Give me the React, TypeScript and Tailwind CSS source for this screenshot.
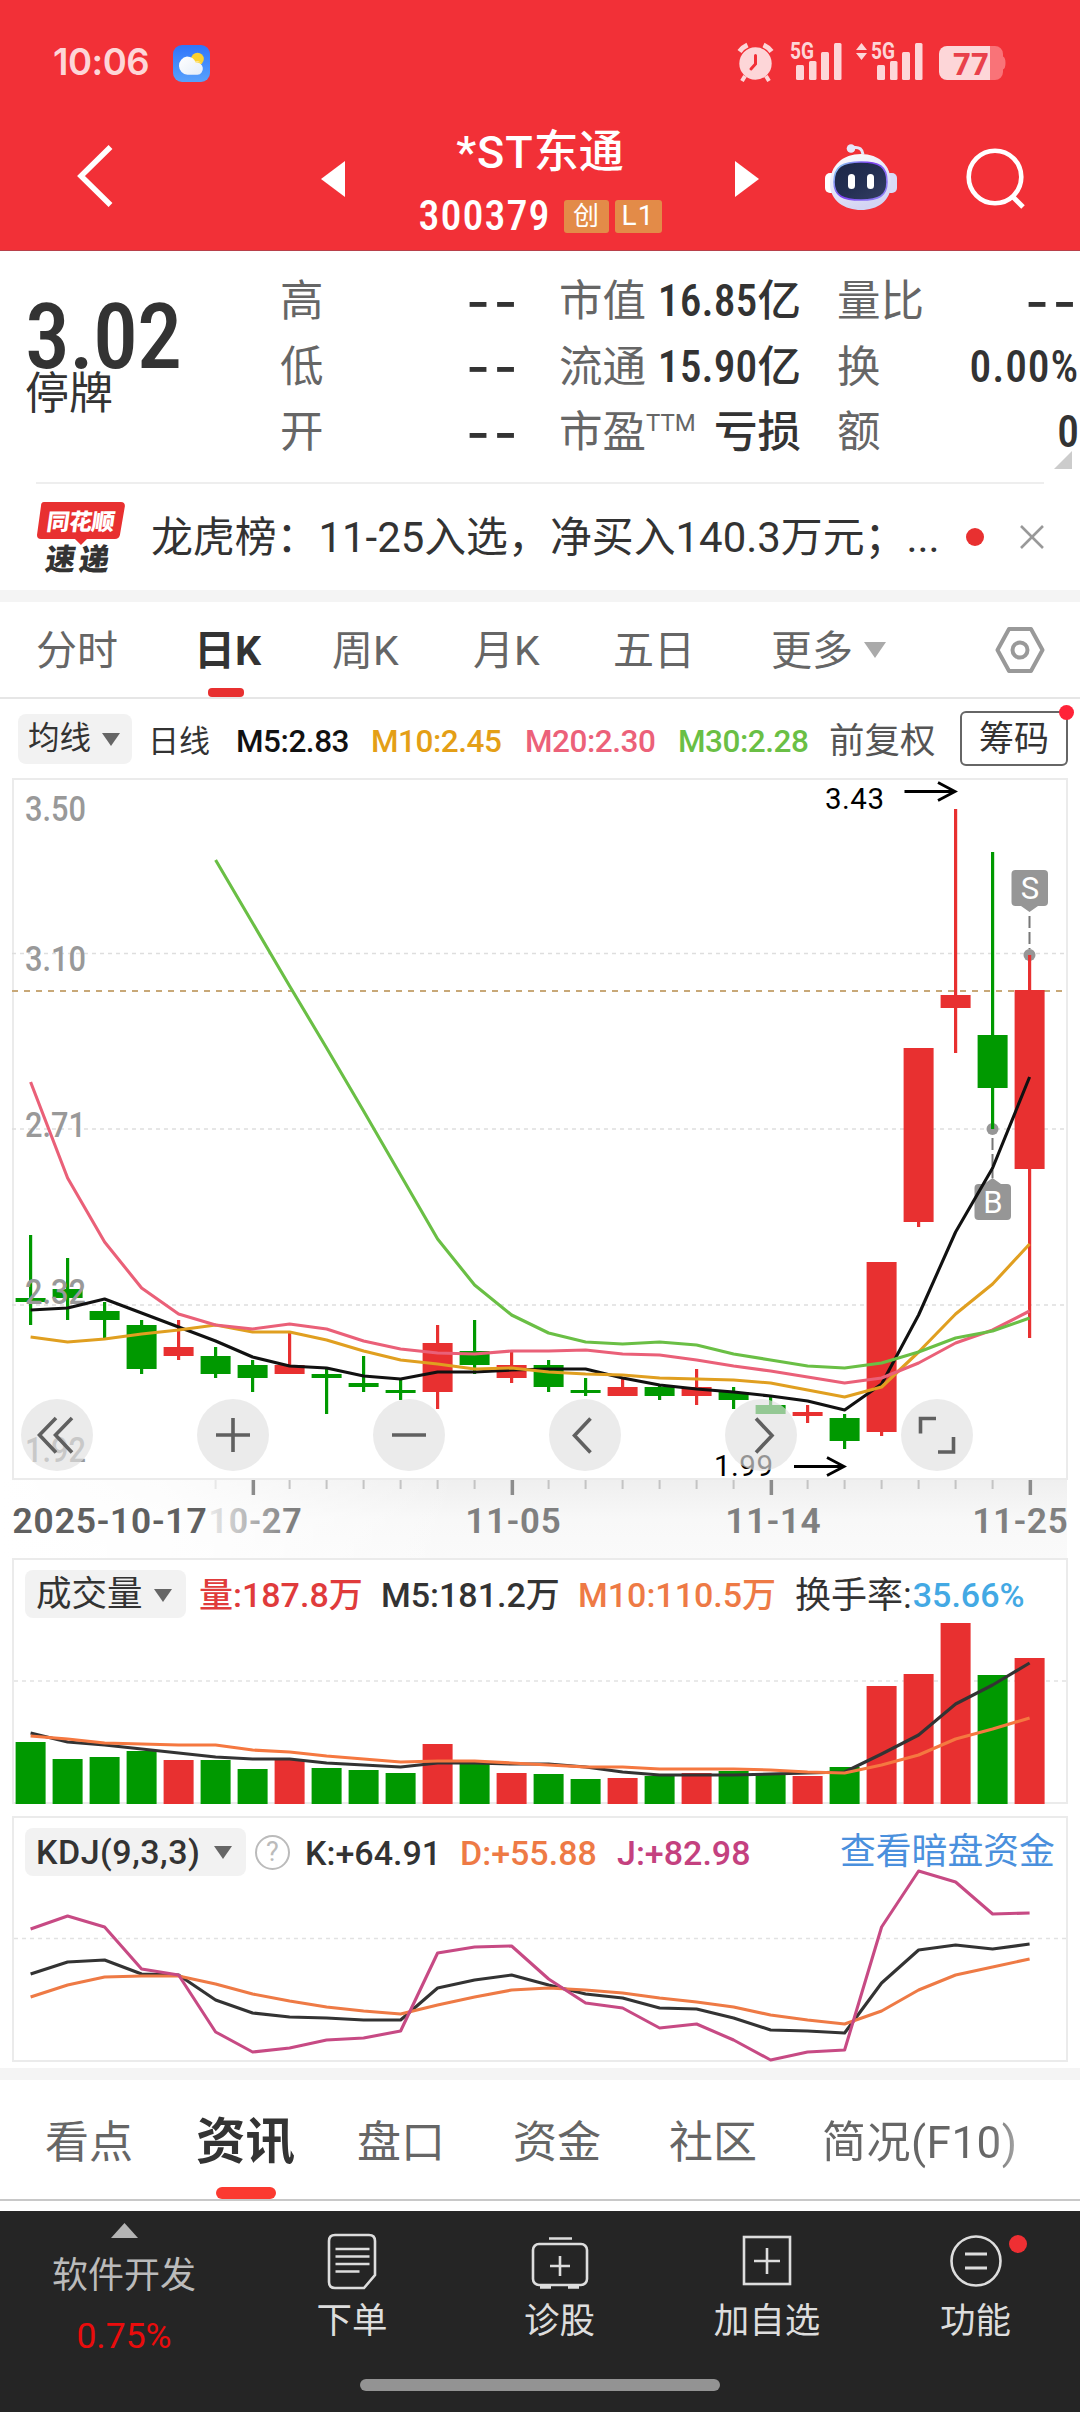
import { ReactNode } from "react";
import clsx from "clsx";

const RED = "#e83030";
const GREEN = "#009900";

// [high, bodyTop, bodyBottom, low, rising]
const candles: [number, number, number, number, boolean][] = [
  [1235, 1298, 1302, 1325, false],
  [1258, 1289, 1298, 1320, false],
  [1302, 1311, 1320, 1338, false],
  [1320, 1325, 1369, 1374, false],
  [1320, 1347, 1356, 1360, true],
  [1347, 1356, 1374, 1378, false],
  [1360, 1365, 1378, 1392, false],
  [1333, 1365, 1374, 1374, true],
  [1368, 1374, 1378, 1414, false],
  [1356, 1383, 1387, 1392, false],
  [1379, 1390, 1393, 1400, false],
  [1325, 1343, 1392, 1409, true],
  [1320, 1351, 1365, 1374, false],
  [1352, 1365, 1378, 1383, true],
  [1360, 1365, 1387, 1392, false],
  [1378, 1390, 1393, 1396, false],
  [1379, 1387, 1396, 1396, true],
  [1386, 1387, 1396, 1400, false],
  [1369, 1387, 1396, 1405, true],
  [1387, 1392, 1400, 1409, false],
  [1397, 1405, 1414, 1414, false],
  [1405, 1412, 1416, 1423, true],
  [1414, 1418, 1441, 1449, false],
  [1262, 1262, 1432, 1436, true],
  [1048, 1048, 1222, 1227, true],
  [809, 995, 1008, 1053, true],
  [852, 1035, 1088, 1129, false],
  [955, 990, 1169, 1338, true],
];

const ma5 = [1310, 1308, 1299, 1313, 1327, 1341, 1357, 1366, 1368, 1376, 1379, 1372, 1372, 1370, 1369, 1369, 1378, 1385, 1389, 1392, 1396, 1401, 1410, 1384, 1315, 1232, 1168, 1077];
const ma10 = [1337, 1342, 1339, 1334, 1330, 1325, 1332, 1332, 1340, 1351, 1360, 1364, 1369, 1368, 1372, 1374, 1375, 1378, 1379, 1380, 1383, 1390, 1397, 1387, 1352, 1314, 1284, 1244];
const ma20 = [1082, 1178, 1242, 1288, 1314, 1325, 1329, 1324, 1329, 1341, 1349, 1353, 1354, 1351, 1351, 1350, 1354, 1355, 1360, 1366, 1371, 1377, 1383, 1378, 1363, 1343, 1330, 1311];
const ma30 = [860, 923, 986, 1048, 1111, 1175, 1239, 1285, 1315, 1333, 1342, 1344, 1342, 1345, 1354, 1360, 1366, 1368, 1363, 1352, 1338, 1331, 1318];

const volumes = [1742, 1759, 1757, 1751, 1760, 1760, 1769, 1760, 1768, 1770, 1773, 1744, 1764, 1773, 1774, 1779, 1778, 1776, 1773, 1771, 1774, 1776, 1767, 1686, 1674, 1623, 1675, 1658];
const vol5 = [1733, 1742, 1745, 1749, 1753, 1757, 1759, 1759, 1763, 1765, 1767, 1763, 1763, 1764, 1764, 1767, 1772, 1775, 1775, 1775, 1774, 1773, 1772, 1754, 1735, 1704, 1685, 1663];
const vol10 = [1736, 1739, 1743, 1744, 1745, 1745, 1750, 1752, 1756, 1759, 1762, 1761, 1761, 1763, 1765, 1767, 1767, 1769, 1769, 1769, 1770, 1772, 1773, 1765, 1755, 1739, 1729, 1718];

const kLine = [1974, 1962, 1960, 1974, 1975, 2000, 2013, 2017, 2018, 2020, 2020, 1988, 1980, 1975, 1985, 1994, 1998, 2008, 2009, 2018, 2030, 2031, 2033, 1983, 1950, 1945, 1949, 1944];
const dLine = [1997, 1985, 1977, 1976, 1976, 1984, 1994, 2001, 2007, 2011, 2014, 2005, 1997, 1990, 1988, 1990, 1993, 1998, 2002, 2007, 2015, 2020, 2024, 2011, 1990, 1975, 1967, 1959];
const jLine = [1929, 1916, 1927, 1969, 1975, 2032, 2052, 2048, 2040, 2038, 2031, 1953, 1947, 1946, 1979, 2003, 2008, 2028, 2024, 2040, 2060, 2052, 2050, 1927, 1871, 1882, 1914, 1913];

const x = (i: number) => 30.6 + i * 37;

function Line({ data, color, from = 0, width = 3.1 }: { data: number[]; color: string; from?: number; width?: number }) {
  return (
    <polyline
      points={data.map((y, i) => `${x(i + from)},${y}`).join(" ")}
      fill="none"
      stroke={color}
      strokeWidth={width}
      strokeLinejoin="round"
    />
  );
}

function Caret({ className }: { className?: string }) {
  return (
    <svg width="18" height="13" viewBox="0 0 18 13" className={className}>
      <path d="M0 0h18L9 13z" fill="currentColor" />
    </svg>
  );
}

function Signal() {
  return (
    <svg width="54" height="40" viewBox="0 0 54 40" fill="currentColor" className="overflow-visible">
      <text x="0" y="17" fontSize="23" fontWeight="700" textLength="24" lengthAdjust="spacingAndGlyphs">
        5G
      </text>
      <rect x="6" y="23" width="8" height="15" rx="1.5" />
      <rect x="19" y="19" width="7.5" height="19" rx="1.5" />
      <rect x="31" y="10" width="8" height="28" rx="1.5" />
      <rect x="44" y="1" width="7.5" height="37" rx="1.5" />
    </svg>
  );
}

function StatusBar() {
  return (
    <div className="flex h-[126px] items-start pl-[53px] pr-[74px] pt-[42px] text-[#fdd6d8]">
      <span className="mt-[-1px] w-[120px] font-[Inter] text-[36.500px] leading-[42px] font-semibold tracking-[-0.500px]">10:06</span>
      <svg width="37" height="37" viewBox="0 0 37 37" className="mt-[3px]">
        <defs>
          <linearGradient id="sky" x2="0" y2="1">
            <stop stopColor="#2f74fb" />
            <stop offset="1" stopColor="#58a2fc" />
          </linearGradient>
          <linearGradient id="cloud" x2="1" y2="1">
            <stop stopColor="#fff" />
            <stop offset="1" stopColor="#e4edf8" />
          </linearGradient>
        </defs>
        <rect width="37" height="37" rx="9" fill="url(#sky)" />
        <circle cx="24.500" cy="14" r="6.300" fill="#fcd12f" />
        <path d="M14 11.500a9.500 9.500 0 0 1 8.800 6 6.200 6.200 0 0 1 1.700 12.300H14.500a9.200 9.200 0 0 1-.500-18.300z" fill="url(#cloud)" />
        <path d="M22 16.500q5-1.500 8.300 3.500a6.200 6.200 0 0 0-7.500-2.500z" fill="#fdeeb2" />
      </svg>
      <div className="ml-auto flex items-start">
        <svg width="37" height="40" viewBox="0 0 37 40" fill="currentColor">
          <circle cx="18.500" cy="21.500" r="16.200" />
          <path d="M8 34l-3 5M29 34l3 5" stroke="currentColor" strokeWidth="4" />
          <path d="M2.500 9.500a20 20 0 0 1 8-6.500M34.500 9.500a20 20 0 0 0-8-6.500" stroke="currentColor" strokeWidth="5" fill="none" />
          <path d="M18.500 13.500v8.500l-4.500 5" stroke="#f23037" strokeWidth="3" fill="none" strokeLinecap="round" />
        </svg>
        <div className="ml-[16px]">
          <Signal />
        </div>
        <svg width="11" height="18" viewBox="0 0 11 18" className="mt-[1px] ml-[12px]" fill="currentColor">
          <path d="M5.500 0L11 7H0zM0 10h11l-5.500 7z" />
        </svg>
        <div className="ml-[4px]">
          <Signal />
        </div>
        <svg width="67" height="36" viewBox="0 0 67 36" className="ml-[14px] mt-[3px]">
          <path d="M51 1h5a8 8 0 0 1 8 8v2.500q2.500 1 2.500 6.500t-2.500 6.500V27a8 8 0 0 1-8 8h-5z" fill="#f97378" />
          <path d="M8 1h43v34H8a8 8 0 0 1-8-8V9a8 8 0 0 1 8-8z" fill="currentColor" />
          <text x="14" y="29.500" fontSize="31" fontWeight="800" fontFamily="Roboto" fill="#e9404a" textLength="36">
            77
          </text>
        </svg>
      </div>
    </div>
  );
}

function Robot() {
  return (
    <svg width="73" height="70" viewBox="0 0 73 70">
      <defs>
        <linearGradient id="shell" x2="0.4" y2="1">
          <stop stopColor="#ffffff" />
          <stop offset="1" stopColor="#d3d4f3" />
        </linearGradient>
        <linearGradient id="visor" x2="1" y2="1">
          <stop stopColor="#1c2747" />
          <stop offset="0.5" stopColor="#232f52" />
          <stop offset="1" stopColor="#343e63" />
        </linearGradient>
        <linearGradient id="rim" x2="1" y2="0.6">
          <stop stopColor="#8fe6f5" />
          <stop offset="0.5" stopColor="#7b3ff0" />
          <stop offset="1" stopColor="#8d7bf5" />
        </linearGradient>
      </defs>
      <circle cx="27" cy="5.500" r="4.300" fill="#e6e7fa" />
      <path d="M30 4.500q8-1 9 7" fill="none" stroke="#e6e7fa" strokeWidth="3" />
      <rect x="1" y="30" width="12" height="20" rx="5" fill="#fff" />
      <rect x="61" y="30" width="12" height="20" rx="5" fill="#d9daf7" />
      <path d="M37 11c18 0 30 11 30 30 0 17-14 26-30 26S6 58 6 41C6 22 19 11 37 11z" fill="url(#shell)" />
      <path d="M37 19c18 0 26 4 26 20 0 14-8 18-26 18S10 53 10 39c0-16 9-20 27-20z" fill="url(#visor)" stroke="url(#rim)" strokeWidth="1.600" />
      <rect x="24" y="31" width="7" height="15" rx="3.500" fill="#fff" />
      <rect x="43" y="31" width="7" height="15" rx="3.500" fill="#fff" />
    </svg>
  );
}

function Header() {
  return (
    <header className="h-[251px] border-b border-[#b8404a] bg-[#f23037] text-white">
      <StatusBar />
      <div className="flex h-[124px] items-start">
        <svg width="38" height="64" viewBox="0 0 38 64" className="ml-[76px] mt-[18px]" fill="none">
          <path d="M34.500 3L5 32l29.500 29" stroke="white" strokeWidth="5.500" />
        </svg>
        <svg width="24" height="36" viewBox="0 0 24 36" className="ml-[207px] mt-[35px]">
          <path d="M24 0v36L0 18z" fill="white" />
        </svg>
        <div className="flex w-[390px] flex-col items-center">
          <h1 className="mt-[-1px] text-[45px] leading-[56px] font-medium">
            <span className="tracking-[1px]">*ST</span>东通
          </h1>
          <div className="mt-[15px] flex items-center gap-[6px]">
            <span className="mr-[7px] text-[42px] leading-[40px] font-medium tracking-[1px] [font-stretch:75%]">300379</span>
            <span className="flex h-[33px] w-[45px] items-center justify-center rounded-[3px] bg-[#e38b48] text-[26px]">创</span>
            <span className="flex h-[33px] w-[47px] items-center justify-center rounded-[3px] bg-[#e38b48] text-[28px] tracking-[1px]">L1</span>
          </div>
        </div>
        <svg width="24" height="36" viewBox="0 0 24 36" className="mt-[35px]">
          <path d="M0 0v36l24-18z" fill="white" />
        </svg>
        <div className="ml-[65px] mt-[17px]">
          <Robot />
        </div>
        <svg width="62" height="64" viewBox="0 0 62 64" className="ml-[68px] mt-[21px]" fill="none" stroke="white">
          <circle cx="30" cy="30" r="26.300" strokeWidth="4.600" />
          <path d="M47 49l11 11" strokeWidth="5" />
        </svg>
      </div>
    </header>
  );
}

function QuoteRow({ label, value, labelClass, valueClass }: { label: ReactNode; value: string; labelClass?: string; valueClass?: string }) {
  return (
    <div className="flex h-[65.500px] items-center justify-between leading-none">
      <span className={clsx("text-[#666]", labelClass)}>{label}</span>
      <span className={clsx("font-medium", valueClass)}>{value}</span>
    </div>
  );
}

const dashes = "font-[Inter] text-[52px] tracking-[3.500px] mr-[-1px]";
const digits = "[font-stretch:75%] tracking-[0.100px]";

function Quote() {
  return (
    <section className="flex h-[231px] whitespace-nowrap pt-[18px] text-[43.500px] text-[#333]">
      <div className="w-[280px] pl-[25px] pt-[29px]">
        <div className="text-[90px] leading-[80px] font-medium tracking-[-1px] [font-stretch:75%]">3.02</div>
        <div className="mt-[-6px] text-[44px] leading-[44px]">停牌</div>
      </div>
      <div className="w-[240px]">
        <QuoteRow label="高" value="--" valueClass={dashes} />
        <QuoteRow label="低" value="--" valueClass={dashes} />
        <QuoteRow label="开" value="--" valueClass={dashes} />
      </div>
      <div className="ml-[39px] w-[242px]">
        <QuoteRow label="市值" value="16.85亿" valueClass={digits} />
        <QuoteRow label="流通" value="15.90亿" valueClass={digits} />
        <QuoteRow
          label={
            <>
              市盈<sup className="relative top-[-16px] align-baseline text-[24px] leading-none">TTM</sup>
            </>
          }
          value="亏损"
        />
      </div>
      <div className="relative ml-[36px] w-[242px]">
        <QuoteRow label="量比" value="--" valueClass={dashes} />
        <QuoteRow label="换" value="0.00%" valueClass="[font-stretch:75%] tracking-[0.900px]" />
        <QuoteRow label="额" value="0" valueClass={digits} />
        <svg width="18" height="18" viewBox="0 0 18 18" className="absolute top-[182px] right-[7px]">
          <path d="M18 0v18H0z" fill="#ccc" />
        </svg>
      </div>
    </section>
  );
}

function News() {
  return (
    <section className="mx-[36px] flex h-[108px] items-center border-t-2 border-[#eee] text-[#333]">
      <svg width="90" height="76" viewBox="0 0 90 76" className="mt-[2px]">
        <path d="M8 2h77q4 0 4 4l-5 29q-1 4-5 4H51l-6 6-6-6H5q-4 0-4-4L5 6q0-4 3-4z" fill="#e83030" />
        <g transform="skewX(-8)" fontWeight="900" textAnchor="middle">
          <text x="48" y="30" fontSize="23" fill="white" textLength="68">
            同花顺
          </text>
          <text x="50" y="70" fontSize="30" fill="#333" textLength="64">
            速递
          </text>
        </g>
      </svg>
      <p className="ml-[25px] w-[791px] pt-[2px] text-[41.900px] leading-none whitespace-nowrap">龙虎榜：11-25入选，净买入140.3万元；...</p>
      <span className="ml-[25px] h-[18px] w-[18px] rounded-full bg-[#e83030]" />
      <svg width="24" height="24" viewBox="0 0 24 24" className="ml-[36px]" stroke="#999" strokeWidth="2.600">
        <path d="M1 1l22 22M23 1L1 23" />
      </svg>
    </section>
  );
}

const periods = [
  { label: "分时", box: "w-[158px]" },
  { label: "日K", box: "w-[138px]", active: true },
  { label: "周K", box: "w-[141px]" },
  { label: "月K", box: "w-[140px]" },
  { label: "五日", box: "w-[158px]" },
];

function PeriodTabs() {
  return (
    <nav className="flex h-[97px] items-center border-b-2 border-[#e6e6e6] pl-[36px] text-[41px] whitespace-nowrap text-[#666]">
      {periods.map((p) => (
        <div key={p.label} className={clsx("relative flex h-full items-center pt-[4px]", p.box, p.active && "font-bold text-[#333]")}>
          {p.label}
          {p.active && <span className="absolute bottom-0 left-[14px] h-[9px] w-[36px] rounded-[4px] bg-[#e83030]" />}
        </div>
      ))}
      <span className="pt-[4px]">更多</span>
      <Caret className="ml-[11px] h-[18px] w-[22px] text-[#aaa]" />
      <svg width="50" height="48" viewBox="0 0 50 48" className="ml-[109px]" fill="none" stroke="#999" strokeWidth="4">
        <path d="M14 3h22l11.500 21L36 45H14L2.500 24z" strokeLinejoin="round" />
        <circle cx="25" cy="24" r="7.500" />
      </svg>
    </nav>
  );
}

function MaBar() {
  return (
    <div className="flex h-[79px] items-center text-[31.500px] whitespace-nowrap text-[#333]">
      <button className="ml-[18px] flex h-[50px] w-[114px] items-center justify-between rounded-[8px] bg-[#f2f2f2] pr-[12px] pl-[10px] pt-[1px]">
        均线
        <Caret className="text-[#666]" />
      </button>
      <div className="flex items-center pt-[7px] font-medium tracking-[-0.450px]">
        <span className="ml-[16px] w-[88px] text-[31px] font-normal tracking-normal">日线</span>
        <span className="w-[135px] text-[#111]">M5:2.83</span>
        <span className="w-[154px] text-[#e49f16]">M10:2.45</span>
        <span className="w-[153px] text-[#ec6179]">M20:2.30</span>
        <span className="w-[151px] text-[#6abf45]">M30:2.28</span>
        <span className="w-[131px] text-[35.500px] leading-none font-normal tracking-normal text-[#555]">前复权</span>
      </div>
      <button className="relative flex h-[55px] w-[108px] items-center justify-center rounded-[6px] border-2 border-[#666] pt-[4px] text-[35px]">
        筹码
        <span className="absolute top-[-8px] right-[-8px] h-[15px] w-[15px] rounded-full bg-[#ff2338]" />
      </button>
    </div>
  );
}

function Marker({ cx, top, label }: { cx: number; top: number; label: string }) {
  return (
    <g>
      <rect x={cx - 18} y={top} width="36.500" height="36" rx="4" fill="#969696" />
      <text x={cx + 0.5} y={top + 29} fontSize="31" fill="white" textAnchor="middle">
        {label}
      </text>
    </g>
  );
}

const priceLabels: [string, number][] = [
  ["3.50", 821],
  ["3.10", 971],
  ["2.71", 1137],
  ["2.32", 1304],
  ["1.92", 1462],
];

const controls = [
  "M56 1418l-16.500 17 16.500 17.500M72 1418l-16.500 17 16.500 17.500",
  "M233 1418v34M216 1435h34",
  "M392 1435h34",
  "M590.500 1418.500l-16 17 16 17",
  "M756 1418.500l16 17-16 17",
  "M920.500 1433.500v-15h15.500M953.500 1437v15h-15.500",
];

function CandleChart() {
  return (
    <svg width="1080" height="780" viewBox="0 778 1080 780" className="block">
      <defs>
        <linearGradient id="shade" x2="0" y2="1">
          <stop stopColor="#efefef" />
          <stop offset="0.5" stopColor="#f8f8f8" />
          <stop offset="1" stopColor="#fafafa" />
        </linearGradient>
        <linearGradient id="fadeLeft">
          <stop stopColor="#fff" />
          <stop offset="0.35" stopColor="#fff" stopOpacity="0.85" />
          <stop offset="1" stopColor="#fff" stopOpacity="0" />
        </linearGradient>
        <linearGradient id="dateFade" gradientUnits="userSpaceOnUse" x1="205" x2="290">
          <stop stopColor="#808080" stopOpacity="0.1" />
          <stop offset="1" stopColor="#808080" />
        </linearGradient>
      </defs>
      <rect x="0" y="1480" width="1067" height="79" fill="url(#shade)" />
      <rect x="0" y="1480" width="460" height="79" fill="url(#fadeLeft)" />
      <rect x="13" y="779" width="1054" height="700" fill="#fff" stroke="#ebebeb" strokeWidth="2" />

      <g stroke="#dedede" strokeWidth="1.300" strokeDasharray="4 4">
        <path d="M12 953.500h1052M12 1129h1052M12 1305h1052" />
      </g>
      <path d="M12 991h1052" stroke="#c8a878" strokeWidth="1.800" strokeDasharray="6 6" />

      {/* buy and sell flags */}
      <path d="M1029.500 916v33M992.500 1138v40" stroke="#777" strokeWidth="2" strokeDasharray="12 4" />
      <circle cx="1029.500" cy="955" r="6" fill="#969696" />
      <circle cx="992.500" cy="1129" r="6" fill="#969696" />
      <path d="M1021 906h17l-8.500 6zM984 1184h17l-8.500-6z" fill="#969696" />
      <Marker cx={1029.5} top={870} label="S" />
      <Marker cx={992.5} top={1184} label="B" />

      {candles.map(([high, top, bottom, low, up], i) => (
        <g key={i} fill={up ? RED : GREEN}>
          <rect x={x(i) - 1.6} y={high} width="3.200" height={low - high} />
          <rect x={x(i) - 15} y={top} width="30" height={bottom - top} />
        </g>
      ))}

      <g fill="#999" fontSize="34.500" fontWeight="500">
        {priceLabels.map(([label, y]) => (
          <text key={label} x="25" y={y} textLength="61" lengthAdjust="spacingAndGlyphs">
            {label}
          </text>
        ))}
      </g>

      <Line data={ma5} color="#111" />
      <Line data={ma10} color="#e09f20" />
      <Line data={ma20} color="#ea6078" />
      <Line data={ma30} color="#6abf45" from={5} />

      <g fontSize="29.500" fill="#000">
        <text x="825" y="809" textLength="59">
          3.43
        </text>
        <text x="714" y="1476" textLength="59">
          1.99
        </text>
      </g>
      <g fill="none" stroke="#000" strokeWidth="2.800">
        <path d="M904.500 791.500h50M938 782.500l17 9-17 9" />
        <path d="M794 1466.500h50M827 1457.500l17 9-17 9" />
      </g>

      {controls.map((d, i) => (
        <g key={i}>
          <circle cx={57 + i * 176} cy="1435" r="36" fill="#e1e1e1" fillOpacity="0.66" />
          <path d={d} fill="none" stroke="#606060" strokeWidth="3.600" />
        </g>
      ))}

      {/* time axis */}
      {candles.map((_, i) =>
        i < 5 ? null : [6, 13, 20, 27].includes(i) ? (
          <rect key={i} x={x(i) - 1} y="1480" width="3.500" height="15" fill="#8c8c8c" />
        ) : (
          <rect key={i} x={x(i) - 1} y="1480" width="2" height="9" fill={i === 5 ? "#e8e8e8" : "#c4c4c4"} />
        )
      )}
      <g fontSize="34.500" fontWeight="500" fill="#808080" className="[font-stretch:75%]">
        <text x="12" y="1533" textLength="195" fill="#606060" lengthAdjust="spacingAndGlyphs">
          2025-10-17
        </text>
        <text x="208" y="1533" textLength="94" fill="url(#dateFade)" lengthAdjust="spacingAndGlyphs">
          10-27
        </text>
        <text x="465" y="1533" textLength="96" lengthAdjust="spacingAndGlyphs">
          11-05
        </text>
        <text x="725" y="1533" textLength="96" lengthAdjust="spacingAndGlyphs">
          11-14
        </text>
        <text x="972" y="1533" textLength="96" lengthAdjust="spacingAndGlyphs">
          11-25
        </text>
      </g>
    </svg>
  );
}

function VolumeChart() {
  return (
    <section className="grid h-[258px]">
      <svg width="1080" height="258" viewBox="0 1558 1080 258" className="col-start-1 row-start-1">
        <rect x="13" y="1559" width="1054" height="244" fill="#fff" stroke="#ebebeb" strokeWidth="2" />
        <path d="M14 1681h1052" stroke="#e2e2e2" strokeWidth="1.500" strokeDasharray="4 4" />
        {volumes.map((y, i) => (
          <rect key={i} x={x(i) - 15} y={y} width="30" height={1804 - y} fill={candles[i][4] ? RED : GREEN} />
        ))}
        <Line data={vol5} color="#333" />
        <Line data={vol10} color="#f57840" />
      </svg>
      <div className="col-start-1 row-start-1 mt-[12px] flex h-[48px] items-center pl-[25px] text-[34px] whitespace-nowrap text-[#333]">
        <button className="flex h-[48px] w-[161px] items-center justify-between rounded-[8px] bg-[#f2f2f2] pr-[14px] pl-[11px] pt-[2px] text-[35.500px]">
          成交量
          <Caret className="text-[#666]" />
        </button>
        <div className="flex items-center pt-[3px] font-medium">
          <span className="ml-[13px] w-[182px] text-[#e03b3b]">量:187.8万</span>
          <span className="w-[197px]">M5:181.2万</span>
          <span className="w-[217px] text-[#ee7a45]">M10:110.5万</span>
          <span className="text-[36px] leading-none font-normal">换手率:</span>
          <span className="ml-[1px] text-[#43a9e4]">35.66%</span>
        </div>
      </div>
    </section>
  );
}

function KdjChart() {
  return (
    <section className="grid h-[252px]">
      <div className="z-0 col-start-1 row-start-1 mt-[12px] flex h-[48px] items-center pl-[25px] text-[34px] font-medium whitespace-nowrap text-[#333]">
        <button className="flex h-[48px] w-[221px] items-center justify-between rounded-[8px] bg-[#f2f2f2] pr-[14px] pl-[11px] tracking-[0.500px]">
          KDJ(9,3,3)
          <Caret className="text-[#666]" />
        </button>
        <span className="ml-[9px] flex h-[35px] w-[35px] items-center justify-center rounded-full border-2 border-[#bbb] text-[27px] font-normal text-[#bbb]">?</span>
        <div className="flex items-center pt-[2px]">
          <span className="ml-[15px] w-[155px]">K:+64.91</span>
          <span className="w-[157px] text-[#ee7a45]">D:+55.88</span>
          <span className="w-[223px] text-[#c4417f]">J:+82.98</span>
          <span className="text-[35.800px] leading-none font-normal text-[#4a90dd]">查看暗盘资金</span>
        </div>
      </div>
      <svg width="1080" height="252" viewBox="0 1816 1080 252" className="z-10 col-start-1 row-start-1">
        <rect x="13" y="1817" width="1054" height="244" fill="none" stroke="#ebebeb" strokeWidth="2" />
        <path d="M14 1938.500h1052" stroke="#e2e2e2" strokeWidth="1.500" strokeDasharray="4 4" />
        <Line data={kLine} color="#333" />
        <Line data={dLine} color="#ee7a45" />
        <Line data={jLine} color="#c74a84" />
      </svg>
    </section>
  );
}

const infoTabs = [
  { label: "看点", box: "w-[151px]" },
  { label: "资讯", box: "w-[161px]", active: true },
  { label: "盘口", box: "w-[156px]" },
  { label: "资金", box: "w-[156px]" },
  { label: "社区", box: "w-[153px]" },
];

function InfoTabs() {
  return (
    <nav className="flex h-[121px] items-center border-b-2 border-[#c8c8c8] pl-[45px] text-[44px] whitespace-nowrap text-[#666]">
      {infoTabs.map((t) => (
        <div key={t.label} className={clsx("relative flex h-full items-center pt-[6px]", t.box, t.active && "text-[49.500px] font-bold text-[#333]")}>
          {t.label}
          {t.active && <span className="absolute bottom-0 left-[20px] h-[12px] w-[60px] rounded-[6px] bg-[#fb3a30]" />}
        </div>
      ))}
      <span className="bg-linear-to-r from-[#666] from-85% to-[#aaa] bg-clip-text pt-[6px] tracking-[0.500px] text-transparent">简况(F10)</span>
    </nav>
  );
}

function NavItem({ label, box, children }: { label: string; box: string; children: ReactNode }) {
  return (
    <div className={clsx("flex flex-col items-center", box)}>
      <div className="mt-[21px] h-[60px]">{children}</div>
      <span className="mt-[7px] text-[35.500px] leading-[44px] text-[#ddd]">{label}</span>
    </div>
  );
}

function BottomNav() {
  return (
    <footer className="flex h-[201px] flex-col bg-[#252525]">
      <div className="flex h-[168px]">
        <div className="flex w-[248px] flex-col items-center text-[36px] leading-none">
          <svg width="27" height="15" viewBox="0 0 27 15" className="mt-[12px]">
            <path d="M13.500 0L27 15H0z" fill="#b4b4b4" />
          </svg>
          <span className="mt-[20px] text-[#bbb]">软件开发</span>
          <span className="mt-[25px] text-[35.500px] text-[#ea0c0c]">0.75%</span>
        </div>
        <NavItem label="下单" box="w-[208px]">
          <svg width="50" height="58" viewBox="0 0 50 58" fill="none" stroke="#ddd" strokeWidth="2.600">
            <path d="M8 3h34q6 0 6 6v34L37 56H8q-6 0-6-6V9q0-6 6-6z" />
            <path d="M8.500 17h34M8.500 24.500h34M8.500 32h34M8.500 39.500h24" />
          </svg>
        </NavItem>
        <NavItem label="诊股" box="w-[207px]">
          <svg width="60" height="58" viewBox="0 0 60 58" fill="none" stroke="#ddd" strokeWidth="2.600">
            <rect x="3" y="12" width="54" height="41" rx="6" />
            <path d="M19 6.500h23M30 24v20M20 34h20" />
            <path d="M10 55h11M38 55h11" strokeWidth="3.500" />
          </svg>
        </NavItem>
        <NavItem label="加自选" box="w-[208px]">
          <svg width="50" height="58" viewBox="0 0 50 58" fill="none" stroke="#ddd" strokeWidth="2.600">
            <rect x="2" y="5" width="46" height="47" />
            <path d="M25 16v26M12 29h26" />
          </svg>
        </NavItem>
        <NavItem label="功能" box="relative w-[209px]">
          <svg width="54" height="58" viewBox="0 0 54 58" fill="none" stroke="#ddd" strokeWidth="2.600">
            <circle cx="27" cy="29" r="24.500" />
            <path d="M16 22h22M16 36h22" strokeWidth="3" />
          </svg>
          <span className="absolute top-[24px] left-[138px] h-[18px] w-[18px] rounded-full bg-[#ef2f33]" />
        </NavItem>
      </div>
      <div className="mx-auto h-[12px] w-[360px] rounded-full bg-[#939393]" />
    </footer>
  );
}

export default function App() {
  return (
    <div className="w-[1080px] overflow-hidden bg-white font-[Roboto,'Noto_Sans_CJK_SC',sans-serif]">
      <Header />
      <Quote />
      <News />
      <div className="h-[12px] bg-[#f4f4f4]" />
      <PeriodTabs />
      <MaBar />
      <CandleChart />
      <VolumeChart />
      <KdjChart />
      <div className="h-[12px] bg-[#f4f4f4]" />
      <InfoTabs />
      <div className="h-[10px]" />
      <BottomNav />
    </div>
  );
}
